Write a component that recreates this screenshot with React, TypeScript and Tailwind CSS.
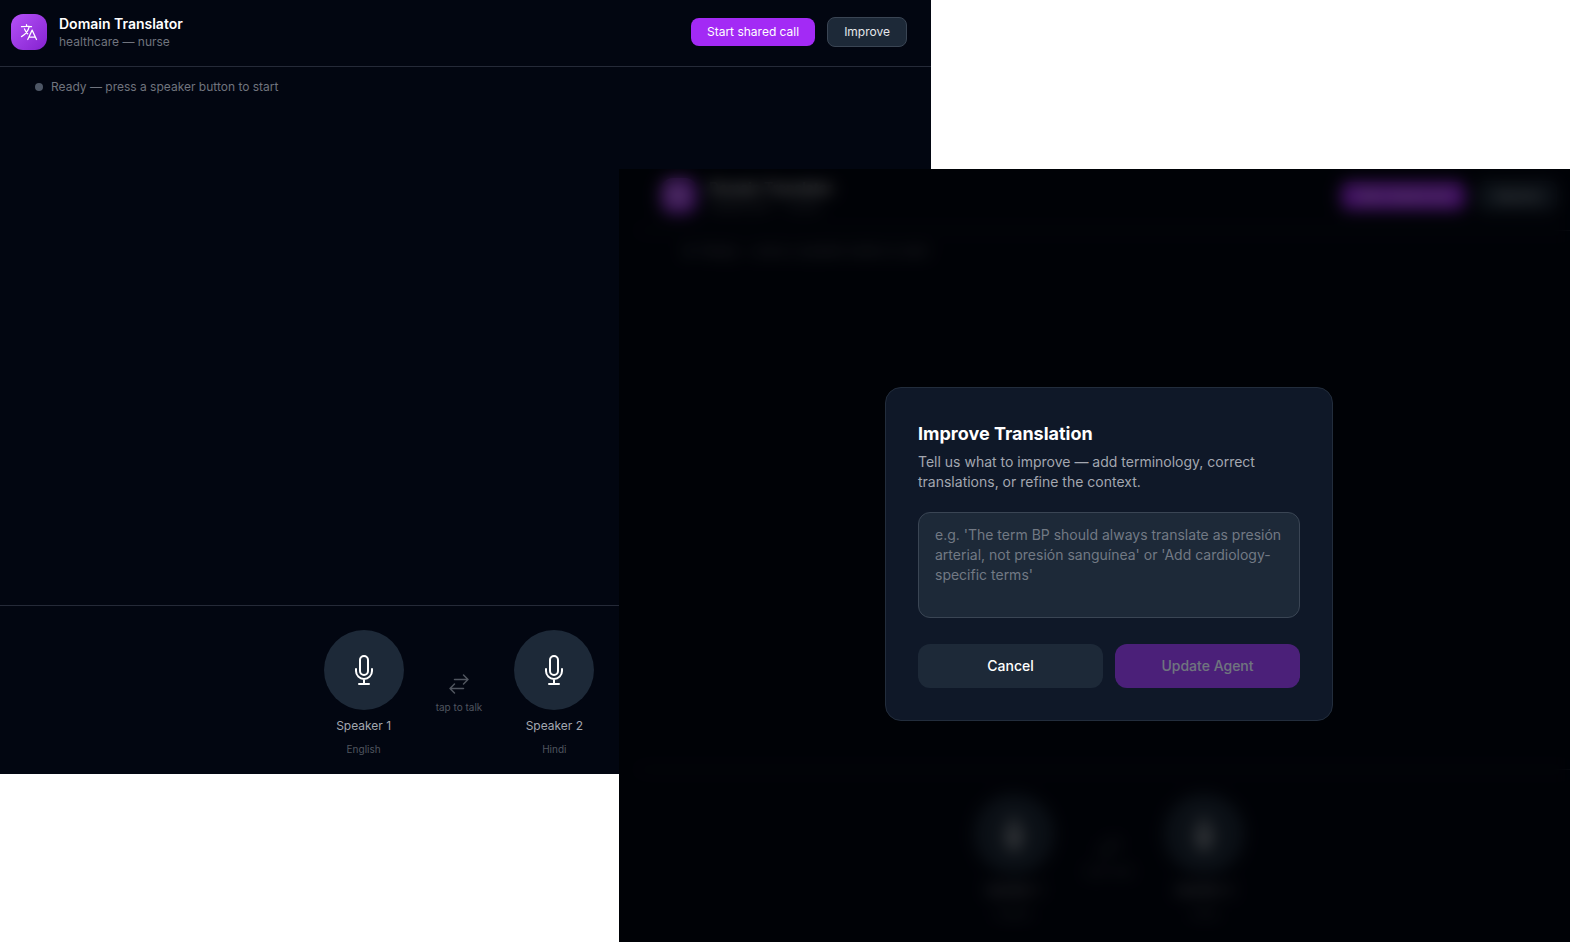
import { useState } from "react";
import type { ReactNode } from "react";
import { HiOutlineArrowsRightLeft, HiOutlineLanguage, HiOutlineMicrophone } from "react-icons/hi2";

const speakers = [
  { name: "Speaker 1", language: "English" },
  { name: "Speaker 2", language: "Hindi" },
];

const Header = () => (
  <header className="flex items-center justify-between border-b border-[#252a38] px-6 py-4">
    <div className="flex items-center gap-3">
      <div className="flex size-9 items-center justify-center rounded-xl bg-linear-to-br from-[#b550f8] to-[#8520cf]">
        <HiOutlineLanguage className="size-5 text-white" />
      </div>
      <div>
        <h1 className="text-sm font-semibold text-white">Domain Translator</h1>
        <p className="text-xs text-[#70747e]">healthcare — nurse</p>
      </div>
    </div>
    <div className="flex items-center gap-3">
      <button type="button" className="rounded-lg bg-[#a32af5] px-4 py-1.5 text-xs text-white">
        Start shared call
      </button>
      <button type="button" className="rounded-lg border border-[#3a4554] bg-[#1d2938] px-4 py-1.5 text-xs text-gray-200">
        Improve
      </button>
    </div>
  </header>
);

const SpeakerButton = ({ name, language }: { name: string; language: string }) => (
  <div className="flex w-20 flex-col items-center gap-2">
    <button
      type="button"
      aria-label={`${name}, ${language}`}
      className="flex size-20 items-center justify-center rounded-full bg-[#1d2938] text-white"
    >
      <HiOutlineMicrophone className="size-8" />
    </button>
    <span className="text-xs text-[#a3a7b0]">{name}</span>
    <span className="text-[10px] leading-[15px] text-[#50555f]">{language}</span>
  </div>
);

const Translator = ({ className }: { className: string }) => (
  <div className={`flex flex-1 flex-col ${className}`}>
    <Header />
    <main className="flex flex-1 flex-col px-12 py-3">
      <div className="flex items-center gap-2">
        <span className="size-2 rounded-full bg-[#4d5665]" />
        <span className="text-xs text-[#70747e]">Ready — press a speaker button to start</span>
      </div>
    </main>
    <footer className="flex items-center justify-center gap-8 border-t border-[#252a38] py-6">
      <SpeakerButton {...speakers[0]} />
      <div className="flex flex-col items-center gap-1 text-[#50555f]">
        <HiOutlineArrowsRightLeft className="size-6" />
        <span className="text-[10px] leading-[15px]">tap to talk</span>
      </div>
      <SpeakerButton {...speakers[1]} />
    </footer>
  </div>
);

const Window = ({ className, children }: { className: string; children: ReactNode }) => (
  <section className={`absolute flex overflow-hidden bg-[#020611] ${className}`}>{children}</section>
);

const ImproveDialog = () => {
  const [notes, setNotes] = useState("");

  return (
    <div className="absolute inset-0 flex items-center justify-center bg-black/60 pb-1 pl-[29px] backdrop-blur-sm">
      <div
        role="dialog"
        aria-labelledby="improve-title"
        className="w-full max-w-md rounded-2xl border border-[#222d3c] bg-[#0f1828] p-8"
      >
        <h2 id="improve-title" className="text-lg font-bold text-white">Improve Translation</h2>
        <p className="mt-1 text-sm text-[#a3a7b0]">
          Tell us what to improve — add terminology, correct translations, or refine the context.
        </p>
        <textarea
          rows={4}
          aria-label="What to improve"
          value={notes}
          onChange={(e) => setNotes(e.target.value)}
          placeholder="e.g. 'The term BP should always translate as presión arterial, not presión sanguínea' or 'Add cardiology-specific terms'"
          className="mt-5 block w-full resize-none rounded-xl border border-[#3a4554] bg-[#1d2938] px-4 py-3 text-sm text-white placeholder:text-[#727984]"
        />
        <div className="mt-[26px] grid grid-cols-2 gap-3">
          <button type="button" className="rounded-xl bg-[#1d2938] py-3 text-sm font-medium text-white">
            Cancel
          </button>
          <button
            type="button"
            disabled={!notes}
            className="rounded-xl bg-[#a52cf3] py-3 text-sm font-medium text-white disabled:opacity-40"
          >
            Update Agent
          </button>
        </div>
      </div>
    </div>
  );
};

export default function App() {
  return (
    <div className="relative h-screen overflow-hidden bg-white font-['Inter',sans-serif] antialiased">
      <Window className="top-0 right-[639px] bottom-[168px] left-0">
        <Translator className="-mt-0.5 -mb-[7px] -ml-[13px]" />
      </Window>
      <Window className="top-[169px] right-0 bottom-0 left-[619px]">
        <Translator className="-mt-[7px] -mr-[11px] -mb-[3px] ml-[18px]" />
        <ImproveDialog />
      </Window>
    </div>
  );
}
